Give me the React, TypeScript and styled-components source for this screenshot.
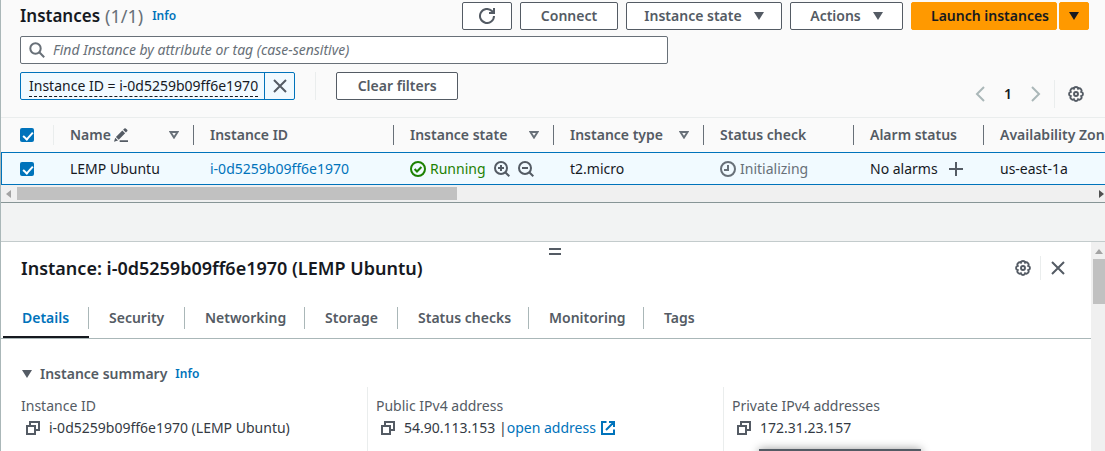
import React from "react";
import styled, { createGlobalStyle, css } from "styled-components";

const c = {
  text: "#16191f",
  label: "#545b64",
  muted: "#687078",
  link: "#0073bb",
  orange: "#ff9900",
  success: "#1d8102",
  line: "#eaeded",
  border: "#aab7b8",
  surface: "#fafafa",
  selected: "#f1faff",
  page: "#f2f3f3",
};

const GlobalStyle = createGlobalStyle`
  * { box-sizing: border-box; }
  body {
    margin: 0;
    background: ${c.page};
    color: ${c.text};
    font-family: "Noto Sans", "Open Sans", sans-serif;
    font-size: 14px;
    line-height: 22px;
  }
  button, input { font: inherit; color: inherit; }
  button { padding: 0; border: 0; background: none; cursor: pointer; }
  a { color: ${c.link}; text-decoration: none; }
  h1, h2, h3, dl, dd { margin: 0; }
  svg { display: block; flex: none; }
`;

/* ---------- icons ---------- */

type IconProps = { size?: number; color?: string; children: React.ReactNode };
const Icon = ({ size = 16, color = c.label, children }: IconProps) => (
  <svg width={size} height={size} viewBox="0 0 16 16" fill="none" stroke={color} strokeWidth="2" aria-hidden="true">
    {children}
  </svg>
);

const gearPath = (() => {
  const points = Array.from({ length: 8 }, (_, i) => {
    const a = ((22.5 + 45 * i) * Math.PI) / 180;
    return `${(8 + 5.7 * Math.cos(a)).toFixed(2)} ${(8 + 5.7 * Math.sin(a)).toFixed(2)}`;
  });
  return `M${points[7]}` + points.map((p) => `A2.25 2.25 0 0 1 ${p}`).join("") + "Z";
})();

const GearIcon = () => (
  <Icon>
    <path d={gearPath} strokeWidth="1.9" />
    <circle cx="8" cy="8" r="2" strokeWidth="1.9" />
  </Icon>
);
const CloseIcon = () => (
  <Icon>
    <path d="M2 2l12 12M14 2L2 14" />
  </Icon>
);
const RefreshIcon = () => (
  <Icon>
    <path d="M15 8a7 7 0 1 1-2.1-5L14.8 5" />
    <path d="M10 5h5V0" />
  </Icon>
);
const SearchIcon = () => (
  <Icon color={c.muted}>
    <circle cx="6.5" cy="6.5" r="5.2" />
    <path d="M10.3 10.3L15.2 15.2" />
  </Icon>
);
const ZoomIcon = ({ plus }: { plus?: boolean }) => (
  <Icon>
    <circle cx="7" cy="7" r="6" />
    <path d="M11.2 11.2L15.3 15.3M4 7h6" />
    {plus && <path d="M7 4v6" />}
  </Icon>
);
const CaretIcon = ({ color = c.label }: { color?: string }) => (
  <svg width="10" height="8" viewBox="0 0 10 8" aria-hidden="true">
    <path d="M0 0h10L5 8z" fill={color} />
  </svg>
);
const SortIcon = () => (
  <svg width="10" height="8" viewBox="0 0 10 8" aria-hidden="true">
    <path d="M1.4 1h7.2L5 6.6z" fill="none" stroke={c.muted} strokeWidth="1.9" />
  </svg>
);
const PencilIcon = () => (
  <Icon size={14}>
    <path d="M0 15.8l1.4-4.8L4.6 14.2z M2.2 10.2l7.3-7.3 3.2 3.2-7.3 7.3z M10.4 2l1.4-1.4q.8-.8 1.7 0l1.5 1.5q.8.8 0 1.7L13.6 5.2z" fill={c.label} stroke="none" />
    <path d="M6.5 15h9.5" />
  </Icon>
);
const ChevronIcon = ({ next }: { next?: boolean }) => (
  <Icon color={c.border}>
    <path d={next ? "M4 1l7 7-7 7" : "M12 1L5 8l7 7"} />
  </Icon>
);
const CheckCircleIcon = () => (
  <Icon color={c.success}>
    <circle cx="8" cy="8" r="7" />
    <path d="M4.6 8l2.4 2.5 4.4-4.5" />
  </Icon>
);
const ClockIcon = () => (
  <Icon color={c.muted}>
    <circle cx="8" cy="8" r="7" />
    <path d="M8 4v5H4" />
  </Icon>
);
const PlusIcon = () => (
  <Icon>
    <path d="M8 1v14M1 8h14" />
  </Icon>
);
const CopyIcon = () => (
  <Icon>
    <path d="M2 6h8v8H2z" />
    <path d="M5 6V2h9v8h-4" />
  </Icon>
);
const ExternalIcon = () => (
  <Icon color={c.link}>
    <path d="M6.5 2H2v12h12V9.5M9 2h5v5M14 2L6 10" />
  </Icon>
);
const ScrollArrow = ({ d, color }: { d: string; color: string }) => (
  <svg width="8" height="8" viewBox="0 0 8 8" aria-hidden="true">
    <path d={d} fill={color} />
  </svg>
);

/* ---------- layout ---------- */

const Page = styled.main`
  display: flex;
  flex-direction: column;
  height: 100vh;
  overflow: hidden;
  border-left: 1px solid ${c.border};
`;

const TableCard = styled.section`
  flex: none;
  background: ${c.surface};
  border-bottom: 1px solid #879596;
`;

const TableTop = styled.header`
  display: flex;
  flex-direction: column;
  gap: 6px;
  padding: 2px 16px 17px 19px;
`;

const Bar = styled.div`
  display: flex;
  align-items: center;
  justify-content: space-between;
`;

const Heading = styled.h1`
  display: flex;
  align-items: center;
  gap: 5px;
  font-size: 17px;
  font-weight: 600;
`;

const Counter = styled.span`
  color: ${c.muted};
  font-size: 18px;
  font-weight: 400;
`;

const InfoLink = styled.a`
  margin-left: 4px;
  font-size: 12px;
  font-weight: 600;
`;

const Actions = styled.div`
  display: flex;
  gap: 8px;
`;

const Button = styled.button<{ $width?: number }>`
  display: flex;
  align-items: center;
  justify-content: center;
  gap: 12px;
  height: 28px;
  min-width: ${(p) => p.$width ?? 50}px;
  border: 1px solid ${c.label};
  border-radius: 2px;
  background: #fff;
  color: ${c.label};
  font-weight: 600;
  white-space: nowrap;
`;

const SplitButton = styled.div`
  display: flex;
  gap: 2px;
`;

const PrimaryButton = styled(Button)`
  border-color: ${c.orange};
  background: ${c.orange};
  color: ${c.text};
`;

const LaunchButton = styled(PrimaryButton)`
  padding: 0 6px 0 18px;
`;

const SearchBox = styled.label`
  display: flex;
  align-items: center;
  gap: 8px;
  width: 61%;
  max-width: 648px;
  height: 28px;
  padding: 0 8px;
  border: 1px solid ${c.muted};
  border-radius: 2px;
  background: #fff;
`;

const SearchInput = styled.input`
  flex: 1;
  min-width: 0;
  padding: 0;
  border: 0;
  outline: 0;
  background: none;
  &::placeholder {
    color: ${c.muted};
    font-style: italic;
    opacity: 1;
  }
`;

const FilterBar = styled(Bar)`
  align-items: flex-start;
  height: 30px;
  padding-top: 2px;
`;

const Filters = styled.div`
  display: flex;
  align-items: center;
  gap: 20px;
`;

const Token = styled.div`
  display: flex;
  height: 28px;
  border: 1px solid ${c.link};
  border-radius: 2px;
  background: ${c.selected};
`;

const TokenText = styled.button`
  height: 22px;
  margin: 2px 6px 2px 8px;
  border-bottom: 1px dashed ${c.text};
  line-height: 20px;
`;

const TokenRemove = styled.button`
  display: flex;
  align-items: center;
  justify-content: center;
  width: 30px;
  border-left: 1px solid ${c.link};
`;

const Divider = styled.span<{ $height: number }>`
  width: 1px;
  height: ${(p) => p.$height}px;
  background: ${c.line};
`;

const Pager = styled.nav`
  display: flex;
  align-items: center;
  gap: 15px;
  padding: 8px 5px 0 0;
`;

const PageNumber = styled.button`
  width: 10px;
  font-weight: 600;
`;

const PagerEnd = styled.div`
  display: flex;
  align-items: center;
  gap: 13px;
  margin-left: -5px;
`;

const IconButton = styled.button`
  display: flex;
  align-items: center;
`;

const TableScroller = styled.div`
  overflow: hidden;
  border-top: 1px solid ${c.line};
`;

const Table = styled.table`
  width: 1248px;
  min-width: 100%;
  table-layout: fixed;
  border-collapse: separate;
  border-spacing: 0;
`;

const Th = styled.th<{ $light?: boolean }>`
  height: 34px;
  padding: 0;
  color: ${c.label};
  font-weight: 600;
  text-align: left;
  white-space: nowrap;
  & > div {
    display: flex;
    align-items: center;
    gap: 3px;
    height: 20px;
    padding: 0 14px 0 16px;
    border-right: 1px solid ${(p) => (p.$light ? c.line : c.muted)};
  }
`;

const SortButton = styled.button`
  margin-left: auto;
`;

const Td = styled.td`
  height: 33px;
  padding: 0 0 0 16px;
  border-top: 1px solid ${c.link};
  border-bottom: 1px solid ${c.link};
  background: ${c.selected};
  white-space: nowrap;
  &:first-child {
    padding-left: 15px;
    border-left: 1px solid ${c.link};
  }
`;

const CellLine = styled.span<{ $color?: string; $gap?: number }>`
  display: flex;
  align-items: center;
  gap: ${(p) => p.$gap ?? 4}px;
  color: ${(p) => p.$color ?? c.text};
`;

const CheckCell = styled.span`
  display: flex;
  padding-left: 3px;
`;

const Checkbox = styled.input`
  appearance: none;
  width: 14px;
  height: 14px;
  margin: 0;
  border-radius: 2px;
  background: ${c.link};
  position: relative;
  &::after {
    content: "";
    position: absolute;
    left: 5px;
    top: 2px;
    width: 4px;
    height: 8px;
    border: solid #fff;
    border-width: 0 2px 2px 0;
    transform: rotate(42deg);
  }
`;

const HorizontalTrack = styled.div`
  display: flex;
  align-items: center;
  gap: 5px;
  height: 17px;
  padding: 0 0 0 3px;
  background: #f0f0f0;
`;

const HorizontalThumb = styled.div`
  width: 40%;
  height: 13px;
  margin-right: auto;
  background: #c1c1c1;
`;

/* ---------- split panel ---------- */

const Panel = styled.section`
  display: flex;
  flex: 1;
  min-height: 0;
  margin-top: 38px;
  border-top: 1px solid #c3cbcc;
  background: #fff;
`;

const PanelBody = styled.div`
  position: relative;
  flex: 1;
  min-width: 0;
`;

const HandleRow = styled.div`
  display: flex;
  justify-content: center;
  padding: 6px 0 0 18px;
`;

const Handle = styled.button`
  width: 12px;
  height: 7px;
  border: solid ${c.label};
  border-width: 2px 0;
`;

const PanelHeader = styled(Bar)`
  height: 26px;
  padding: 0 25px 0 20px;
`;

const PanelTitle = styled.h2`
  font-size: 18px;
  font-weight: 600;
`;

const PanelTools = styled.div`
  display: flex;
  align-items: center;
  gap: 9px;
`;

const Tabs = styled.div`
  display: flex;
  height: 43px;
  margin-top: 15px;
  padding-left: 2px;
  border-bottom: 1px solid ${c.border};
`;

const Tab = styled.button<{ $active?: boolean; $width: number }>`
  display: flex;
  align-items: flex-start;
  width: ${(p) => p.$width}px;
  padding-top: 11px;
  color: ${(p) => (p.$active ? c.link : c.label)};
  font-weight: 600;
  text-align: left;
  white-space: nowrap;
  ${(p) =>
    p.$active &&
    css`
      border-bottom: 2px solid ${c.text};
    `}
  & > span {
    flex: 1;
    padding-left: 20px;
    border-right: 1px solid ${c.border};
  }
  &:first-child > span {
    padding-left: 19px;
  }
  &:last-child > span {
    border-right: 0;
  }
`;

const Summary = styled.h3`
  display: flex;
  align-items: center;
  gap: 8px;
  margin-top: 24px;
  padding-left: 21px;
  color: ${c.label};
  font-size: 14px;
  font-weight: 600;
  a { margin-left: 0; }
`;

const Fields = styled.dl`
  display: grid;
  grid-template-columns: 366px 356px 1fr;
  margin-top: 2px;
`;

const Field = styled.div<{ $first?: boolean }>`
  height: 90px;
  padding: 8px 0 0 ${(p) => (p.$first ? 20 : 8)}px;
  border-left: ${(p) => (p.$first ? 0 : 1)}px solid ${c.line};
`;

const FieldLabel = styled.dt`
  color: ${c.label};
`;

const FieldValue = styled.dd`
  display: flex;
  align-items: center;
  padding-left: 4px;
  color: ${c.label};
  a { display: flex; align-items: center; gap: 4px; }
`;

const CopyButton = styled(IconButton)`
  margin-right: 8px;
`;

const ValueText = styled.span`
  color: #343a43;
  white-space: pre;
`;

const Popover = styled.div`
  position: absolute;
  left: 758px;
  top: 207px;
  width: 162px;
  height: 32px;
  background: #545b64;
  box-shadow: 0 0 10px rgba(0, 0, 0, 0.4);
`;

const VerticalTrack = styled.div`
  display: flex;
  flex-direction: column;
  align-items: center;
  gap: 4px;
  width: 14px;
  padding: 5px 0 0 2px;
  background: #f0f0f0;
`;

const VerticalThumb = styled.div`
  width: 100%;
  height: 45px;
  background: #c1c1c1;
`;

const columnWidths = [53, 140, 200, 160, 150, 150, 130, 265];
const tabs: [string, number][] = [
  ["Details", 86],
  ["Security", 96],
  ["Networking", 120],
  ["Storage", 93],
  ["Status checks", 131],
  ["Monitoring", 115],
  ["Tags", 70],
];

const Sort = ({ name }: { name: string }) => (
  <SortButton aria-label={`Sort by ${name}`}>
    <SortIcon />
  </SortButton>
);

export default function App() {
  return (
    <>
      <GlobalStyle />
      <Page>
        <TableCard>
          <TableTop>
            <Bar>
              <Heading>
                Instances <Counter>(1/1)</Counter>
                <InfoLink href="#info">Info</InfoLink>
              </Heading>
              <Actions>
                <Button aria-label="Refresh"><RefreshIcon /></Button>
                <Button $width={98}>Connect</Button>
                <Button $width={156}>Instance state <CaretIcon /></Button>
                <Button $width={113}>Actions <CaretIcon /></Button>
                <SplitButton>
                  <LaunchButton $width={146}>Launch instances</LaunchButton>
                  <PrimaryButton $width={30} aria-label="More launch options">
                    <CaretIcon color={c.text} />
                  </PrimaryButton>
                </SplitButton>
              </Actions>
            </Bar>
            <SearchBox>
              <SearchIcon />
              <SearchInput
                aria-label="Find instances"
                placeholder="Find Instance by attribute or tag (case-sensitive)"
              />
            </SearchBox>
            <FilterBar>
              <Filters>
                <Token>
                  <TokenText>Instance ID = i-0d5259b09ff6e1970</TokenText>
                  <TokenRemove aria-label="Remove filter"><CloseIcon /></TokenRemove>
                </Token>
                <Divider $height={28} />
                <Button $width={122}>Clear filters</Button>
              </Filters>
              <Pager aria-label="Pagination">
                <IconButton aria-label="Previous page"><ChevronIcon /></IconButton>
                <PageNumber>1</PageNumber>
                <IconButton aria-label="Next page"><ChevronIcon next /></IconButton>
                <PagerEnd>
                  <Divider $height={28} />
                  <IconButton aria-label="Preferences"><GearIcon /></IconButton>
                </PagerEnd>
              </Pager>
            </FilterBar>
          </TableTop>
          <TableScroller>
            <Table>
              <colgroup>
                {columnWidths.map((w, i) => <col key={i} width={w} />)}
              </colgroup>
              <thead>
                <tr>
                  <Th $light>
                    <div><CheckCell><Checkbox type="checkbox" defaultChecked aria-label="Select all" /></CheckCell></div>
                  </Th>
                  <Th><div>Name <PencilIcon /><Sort name="name" /></div></Th>
                  <Th><div>Instance ID</div></Th>
                  <Th><div>Instance state<Sort name="state" /></div></Th>
                  <Th><div>Instance type<Sort name="type" /></div></Th>
                  <Th><div>Status check</div></Th>
                  <Th><div>Alarm status</div></Th>
                  <Th><div>Availability Zone</div></Th>
                </tr>
              </thead>
              <tbody>
                <tr>
                  <Td>
                    <CheckCell><Checkbox type="checkbox" defaultChecked aria-label="Select LEMP Ubuntu" /></CheckCell>
                  </Td>
                  <Td>LEMP Ubuntu</Td>
                  <Td><a href="#instance">i-0d5259b09ff6e1970</a></Td>
                  <Td>
                    <CellLine $gap={8}>
                      <CellLine $color={c.success}><CheckCircleIcon />Running</CellLine>
                      <IconButton aria-label="Include"><ZoomIcon plus /></IconButton>
                      <IconButton aria-label="Exclude"><ZoomIcon /></IconButton>
                    </CellLine>
                  </Td>
                  <Td>t2.micro</Td>
                  <Td><CellLine $color={c.muted}><ClockIcon />Initializing</CellLine></Td>
                  <Td>
                    <CellLine $gap={10}>No alarms<IconButton aria-label="Add alarm"><PlusIcon /></IconButton></CellLine>
                  </Td>
                  <Td>us-east-1a</Td>
                </tr>
              </tbody>
            </Table>
          </TableScroller>
          <HorizontalTrack>
            <ScrollArrow d="M7 0v8L2 4z" color="#a3a3a3" />
            <HorizontalThumb />
            <ScrollArrow d="M2 0v8L7 4z" color="#505050" />
          </HorizontalTrack>
        </TableCard>

        <Panel>
          <PanelBody>
            <HandleRow>
              <Handle aria-label="Resize panel" />
            </HandleRow>
            <PanelHeader>
              <PanelTitle>Instance: i-0d5259b09ff6e1970 (LEMP Ubuntu)</PanelTitle>
              <PanelTools>
                <IconButton aria-label="Panel preferences"><GearIcon /></IconButton>
                <Divider $height={24} />
                <IconButton aria-label="Close panel"><CloseIcon /></IconButton>
              </PanelTools>
            </PanelHeader>
            <Tabs role="tablist">
              {tabs.map(([name, width], i) => (
                <Tab key={name} role="tab" aria-selected={i === 0} $active={i === 0} $width={width}>
                  <span>{name}</span>
                </Tab>
              ))}
            </Tabs>
            <Summary>
              <CaretIcon />
              Instance summary
              <InfoLink href="#summary-info">Info</InfoLink>
            </Summary>
            <Fields>
              <Field $first>
                <FieldLabel>Instance ID</FieldLabel>
                <FieldValue>
                  <CopyButton aria-label="Copy instance ID"><CopyIcon /></CopyButton>
                  <ValueText>i-0d5259b09ff6e1970 (LEMP Ubuntu)</ValueText>
                </FieldValue>
              </Field>
              <Field>
                <FieldLabel>Public IPv4 address</FieldLabel>
                <FieldValue>
                  <CopyButton aria-label="Copy public address"><CopyIcon /></CopyButton>
                  <ValueText>54.90.113.153 |</ValueText>
                  <a href="#open">open address <ExternalIcon /></a>
                </FieldValue>
              </Field>
              <Field>
                <FieldLabel>Private IPv4 addresses</FieldLabel>
                <FieldValue>
                  <CopyButton aria-label="Copy private address"><CopyIcon /></CopyButton>
                  <ValueText>172.31.23.157</ValueText>
                </FieldValue>
              </Field>
            </Fields>
            <Popover />
          </PanelBody>
          <VerticalTrack>
            <ScrollArrow d="M0 7h8L4 2z" color="#a3a3a3" />
            <VerticalThumb />
          </VerticalTrack>
        </Panel>
      </Page>
    </>
  );
}
